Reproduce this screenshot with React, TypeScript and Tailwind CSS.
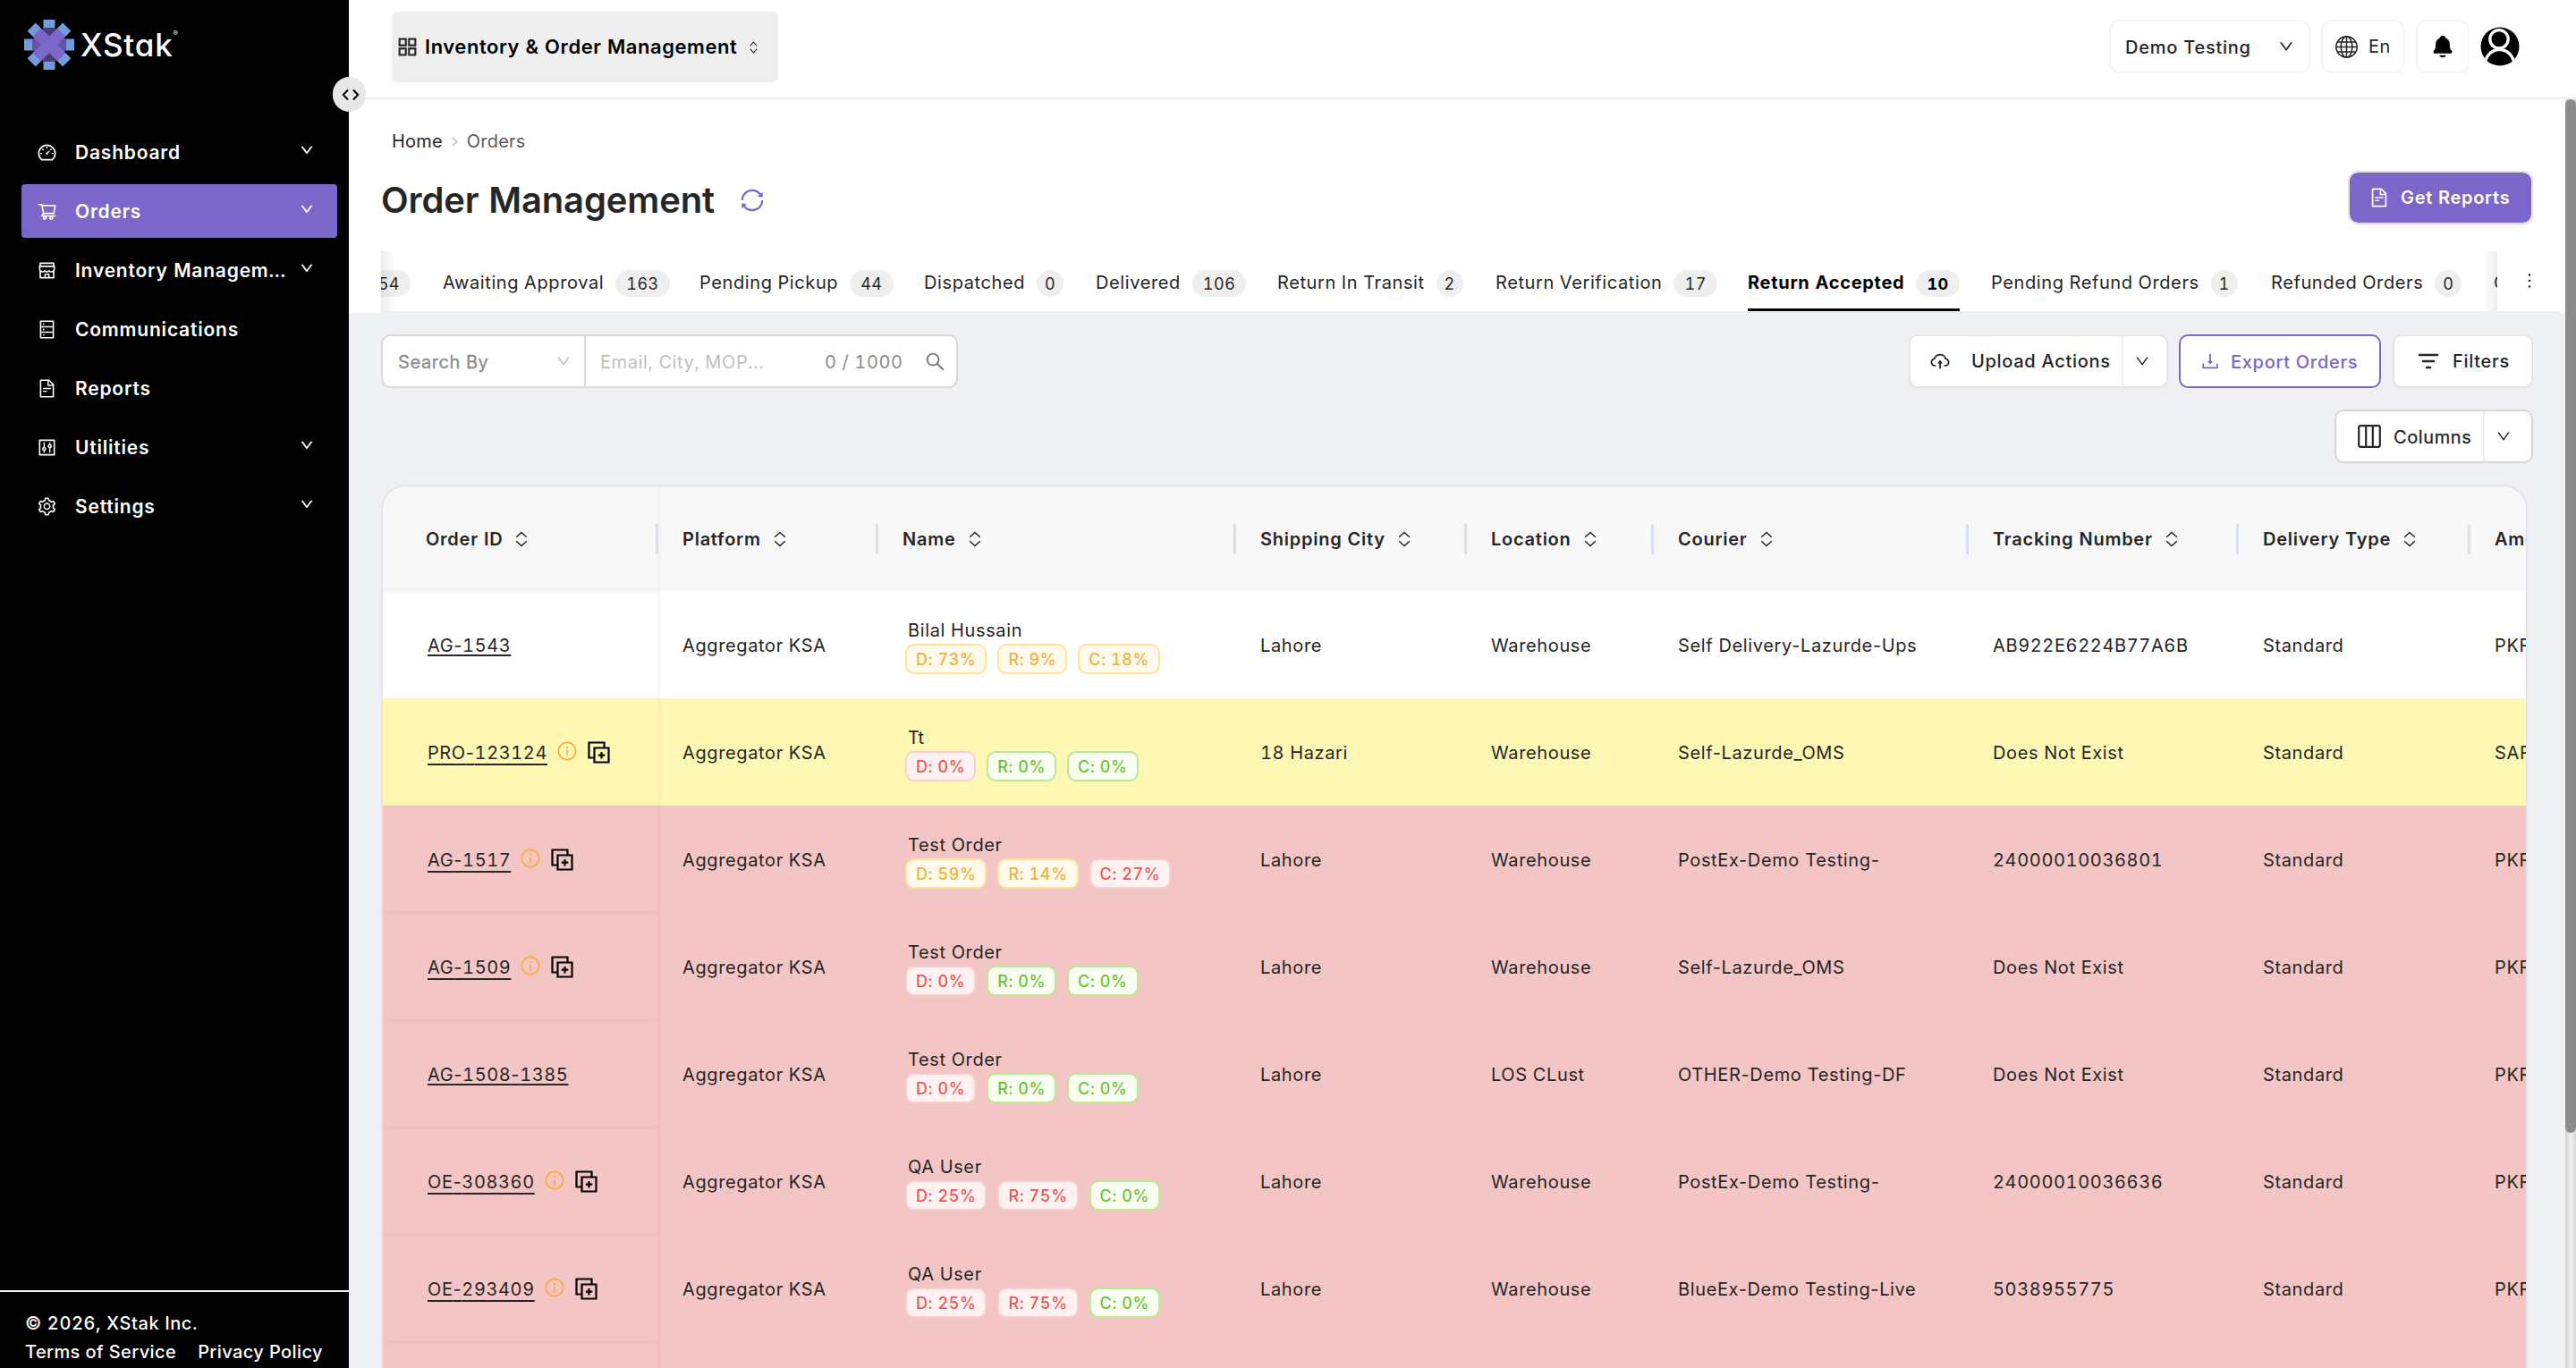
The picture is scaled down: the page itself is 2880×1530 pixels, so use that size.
import React from "react";
import {
  AiOutlineDashboard,
  AiOutlineShoppingCart,
  AiOutlineShop,
  AiOutlineDatabase,
  AiOutlineFileText,
  AiOutlineControl,
  AiOutlineSetting,
  AiOutlineAppstore,
  AiOutlineDown,
  AiOutlineRight,
  AiOutlineSync,
  AiOutlineSearch,
  AiOutlineCloudUpload,
  AiOutlineDownload,
  AiOutlineInfoCircle,
  AiOutlineMore,
} from "react-icons/ai";
import { BsGlobe } from "react-icons/bs";
import { IoNotifications } from "react-icons/io5";

const navItems = [
  { label: "Dashboard", icon: AiOutlineDashboard, more: true },
  { label: "Orders", icon: AiOutlineShoppingCart, more: true, active: true },
  { label: "Inventory Managem...", icon: AiOutlineShop, more: true },
  { label: "Communications", icon: AiOutlineDatabase },
  { label: "Reports", icon: AiOutlineFileText },
  { label: "Utilities", icon: AiOutlineControl, more: true },
  { label: "Settings", icon: AiOutlineSetting, more: true },
];

const tabs = [
  { label: "Awaiting Approval", count: 163, width: "w-[287px]" },
  { label: "Pending Pickup", count: 44, width: "w-[251px]" },
  { label: "Dispatched", count: 0, width: "w-[192px]" },
  { label: "Delivered", count: 106, width: "w-[203px]" },
  { label: "Return In Transit", count: 2, width: "w-[244px]" },
  { label: "Return Verification", count: 17, width: "w-[282px]" },
  { label: "Return Accepted", count: 10, width: "w-[272px]", active: true },
  { label: "Pending Refund Orders", count: 1, width: "w-[313px]" },
  { label: "Refunded Orders", count: 0, width: "w-[249px]" },
];

const columns = [
  "Order ID",
  "Platform",
  "Name",
  "Shipping City",
  "Location",
  "Courier",
  "Tracking Number",
  "Delivery Type",
];

const gridCols =
  "grid w-[2500px] grid-cols-[308px_246px_400px_258px_209px_352px_302px_259px_160px]";

const tagStyles = {
  gold: "border-[#ffe396] bg-[#fffaeb] text-[#f2b13c]",
  red: "border-[#fbcfcd] bg-[#fff2f0] text-[#f25555]",
  green: "border-[#b9e990] bg-[#f8fff0] text-[#6cc23a]",
};

const rowColors = {
  white: "bg-white",
  yellow: "bg-[#fff8b4]",
  red: "bg-[#f3c5c5]",
};

type Tone = keyof typeof tagStyles;

type Order = {
  id: string;
  icons: boolean;
  color: keyof typeof rowColors;
  name: string;
  tags: [string, Tone][];
  city: string;
  location: string;
  courier: string;
  tracking: string;
  amount: string;
};

const orders: Order[] = [
  {
    id: "AG-1543",
    icons: false,
    color: "white",
    name: "Bilal Hussain",
    tags: [["D: 73%", "gold"], ["R: 9%", "gold"], ["C: 18%", "gold"]],
    city: "Lahore",
    location: "Warehouse",
    courier: "Self Delivery-Lazurde-Ups",
    tracking: "AB922E6224B77A6B",
    amount: "PKR",
  },
  {
    id: "PRO-123124",
    icons: true,
    color: "yellow",
    name: "Tt",
    tags: [["D: 0%", "red"], ["R: 0%", "green"], ["C: 0%", "green"]],
    city: "18 Hazari",
    location: "Warehouse",
    courier: "Self-Lazurde_OMS",
    tracking: "Does Not Exist",
    amount: "SAR",
  },
  {
    id: "AG-1517",
    icons: true,
    color: "red",
    name: "Test Order",
    tags: [["D: 59%", "gold"], ["R: 14%", "gold"], ["C: 27%", "red"]],
    city: "Lahore",
    location: "Warehouse",
    courier: "PostEx-Demo Testing-",
    tracking: "24000010036801",
    amount: "PKR",
  },
  {
    id: "AG-1509",
    icons: true,
    color: "red",
    name: "Test Order",
    tags: [["D: 0%", "red"], ["R: 0%", "green"], ["C: 0%", "green"]],
    city: "Lahore",
    location: "Warehouse",
    courier: "Self-Lazurde_OMS",
    tracking: "Does Not Exist",
    amount: "PKR",
  },
  {
    id: "AG-1508-1385",
    icons: false,
    color: "red",
    name: "Test Order",
    tags: [["D: 0%", "red"], ["R: 0%", "green"], ["C: 0%", "green"]],
    city: "Lahore",
    location: "LOS CLust",
    courier: "OTHER-Demo Testing-DF",
    tracking: "Does Not Exist",
    amount: "PKR",
  },
  {
    id: "OE-308360",
    icons: true,
    color: "red",
    name: "QA User",
    tags: [["D: 25%", "red"], ["R: 75%", "red"], ["C: 0%", "green"]],
    city: "Lahore",
    location: "Warehouse",
    courier: "PostEx-Demo Testing-",
    tracking: "24000010036636",
    amount: "PKR",
  },
  {
    id: "OE-293409",
    icons: true,
    color: "red",
    name: "QA User",
    tags: [["D: 25%", "red"], ["R: 75%", "red"], ["C: 0%", "green"]],
    city: "Lahore",
    location: "Warehouse",
    courier: "BlueEx-Demo Testing-Live",
    tracking: "5038955775",
    amount: "PKR",
  },
];

function Logo() {
  return (
    <svg width="58" height="58" viewBox="-29 -29 58 58">
      <g fill="#719ddc">
        <rect x="-6.5" y="-28" width="13" height="56" />
        <rect x="-28" y="-6.5" width="56" height="13" />
        <rect x="-6.5" y="-28" width="13" height="56" transform="rotate(45)" />
        <rect x="-6.5" y="-28" width="13" height="56" transform="rotate(-45)" />
      </g>
      <rect x="-19" y="-6.5" width="38" height="13" fill="#6452a3" />
      <rect x="-6.5" y="-19" width="13" height="38" fill="#493c78" />
      <g fill="#7b66ca">
        <rect x="-6.5" y="-19.5" width="13" height="39" transform="rotate(45)" />
        <rect x="-6.5" y="-19.5" width="13" height="39" transform="rotate(-45)" />
      </g>
    </svg>
  );
}

function SortIcon({ small }: { small?: boolean }) {
  return (
    <svg
      width={small ? 9 : 14}
      height={small ? 14 : 18}
      viewBox="0 0 14 18"
      preserveAspectRatio="none"
      fill="none"
      stroke="currentColor"
      strokeWidth="1.5"
    >
      <path d="M1.2 6.8 7 1.4l5.8 5.4M1.2 11.2 7 16.6l5.8-5.4" />
    </svg>
  );
}

function DuplicateIcon() {
  return (
    <svg width="25" height="25" viewBox="0 0 25 25" fill="none" stroke="#000" strokeWidth="2.2">
      <path d="M7 18.5H1.5v-17h17V7" />
      <path d="M7.5 7.5h16v16h-16zM15.5 12v7.5M11.8 15.7h7.5" />
    </svg>
  );
}

function AvatarIcon() {
  return (
    <svg width="44" height="44" viewBox="0 0 44 44">
      <defs>
        <clipPath id="avatar">
          <circle cx="22" cy="22" r="21.5" />
        </clipPath>
      </defs>
      <circle cx="22" cy="22" r="21.5" fill="#000" />
      <g clipPath="url(#avatar)" fill="#000" stroke="#fff" strokeWidth="3.3">
        <path d="M5 42c1-10 8-16.5 16.5-16.5S37 32 38 42" />
        <circle cx="21" cy="13.8" r="10.2" />
      </g>
    </svg>
  );
}

// the tabular hyphen is too wide between digit groups
function OrderId({ id }: { id: string }) {
  return id.split("-").map((part, i) => (
    <React.Fragment key={i}>
      {i > 0 && <span className="normal-nums">-</span>}
      {part}
    </React.Fragment>
  ));
}

function Sidebar() {
  return (
    <aside className="flex h-full w-[390px] shrink-0 flex-col bg-black text-white">
      <div className="flex h-[137px] items-start gap-1.5 pl-[26px] pt-[21px]">
        <Logo />
        <div className="flex pt-[7px]">
          <span className="text-[35px] font-medium leading-[44px] tracking-[0.8px] [font-feature-settings:'cv11']">
            XStak
          </span>
          <span className="pt-0.5 text-[8px] leading-[14px]">®</span>
        </div>
      </div>
      <nav className="flex grow flex-col gap-[6px]">
        {navItems.map(({ label, icon: Icon, more, active }) => (
          <div
            key={label}
            className={`ml-6 mr-[13px] flex h-[60px] items-center rounded-[4px] pl-[17px] ${
              active ? "bg-[#7b66ca]" : ""
            } ${label === "Dashboard" ? "mt-[3px]" : ""}`}
          >
            <Icon className="size-[23px]" />
            <span className="ml-5 grow text-[21px] font-semibold leading-none tracking-[0.8px]">
              {label}
            </span>
            {more && <AiOutlineDown className="mb-[4px] mr-[26px] size-[16px] stroke-[40]" />}
          </div>
        ))}
      </nav>
      <footer className="h-[87px] border-t-2 border-[#f0f0f0] pl-7 pt-[19px] text-[20px] font-medium leading-8 tracking-[0.4px]">
        <p className="tracking-[0.6px]">© 2026, XStak Inc.</p>
        <p className="flex gap-[24px]">
          <a>Terms of Service</a>
          <a>Privacy Policy</a>
        </p>
      </footer>
    </aside>
  );
}

function Topbar() {
  return (
    <header className="flex h-[111px] shrink-0 items-start border-b-2 border-[#efefef] bg-white pl-12">
      <div className="mt-[13px] flex h-[79px] w-[432px] items-center rounded-[6px] bg-[#efefef] pl-[4px]">
        <AiOutlineAppstore className="size-[27px] stroke-[14]" />
        <span className="ml-[6px] text-[22px] font-semibold tracking-[0.55px] text-black">
          Inventory &amp; Order Management
        </span>
        <span className="ml-[14px]">
          <SortIcon small />
        </span>
      </div>
      <div className="ml-auto mr-[63px] mt-[22px] flex items-start gap-3">
        <div className="flex h-[60px] w-[225px] items-center justify-between rounded-[12px] border-2 border-[#f5f5f5] px-4">
          <span className="pt-px text-[20px] font-medium tracking-[0.75px]">Demo Testing</span>
          <AiOutlineDown className="size-[18px] stroke-[20]" />
        </div>
        <div className="flex h-[60px] w-[94px] items-center gap-3 rounded-[12px] border-2 border-[#f5f5f5] pl-3.5">
          <BsGlobe className="size-[25px]" />
          <span className="text-[20px] tracking-[0.6px]">En</span>
        </div>
        <div className="flex h-[60px] w-[60px] items-center justify-center rounded-[12px] border-2 border-[#f5f5f5]">
          <IoNotifications className="size-[28px] text-black" />
        </div>
        <div className="pt-[8px]">
          <AvatarIcon />
        </div>
      </div>
    </header>
  );
}

function Tabs() {
  return (
    <div className="mt-[31px] flex h-[69px] pl-9">
      <div className="relative flex w-[2366px] items-start overflow-hidden whitespace-nowrap border-b-2 border-[#efefef]">
        <div className="w-[69px] shrink-0 pt-[21px]">
          <span className="-ml-5 flex h-[30px] w-[53px] items-center justify-end rounded-full bg-[#efefef] pr-3 pt-px text-[18px] tracking-[0.5px]">
            54
          </span>
        </div>
        {tabs.map((tab) => (
          <div key={tab.label} className={`h-full shrink-0 ${tab.width}`}>
            <div
              className={`relative flex h-full w-fit items-start gap-[13px] pt-[21px] ${
                tab.active ? "font-bold text-black" : ""
              }`}
            >
              <span
                className={`-mt-px text-[20px] leading-[30px] ${
                  tab.active ? "tracking-[0.7px]" : "tracking-[0.6px]"
                }`}
              >
                {tab.label}
              </span>
              <span
                className={`flex h-[30px] min-w-[30px] items-center justify-center rounded-full bg-[#efefef] pt-px text-[18px] leading-none tracking-[0.5px] ${
                  tab.count < 10 ? "" : "px-[12px]"
                }`}
              >
                {tab.count}
              </span>
              {tab.active && <span className="absolute bottom-0 left-0 h-[3px] w-full bg-black" />}
            </div>
          </div>
        ))}
        <span className="shrink-0 pt-[20px] text-[20px] leading-[30px]">Cancelled</span>
        <span className="absolute left-0 top-0 h-full w-4 bg-linear-to-r from-black/7 to-transparent" />
        <span className="absolute right-0 top-0 h-full w-4 bg-linear-to-l from-black/7 to-transparent" />
      </div>
      <div className="mr-1.5 flex grow justify-center border-b-2 border-[#efefef] pt-[21px]">
        <AiOutlineMore className="ml-[2px] size-[24px]" />
      </div>
    </div>
  );
}

function Toolbar() {
  const button =
    "flex items-center rounded-[10px] bg-white text-[20px] font-medium tracking-[0.7px]";
  return (
    <div className="flex h-[60px] justify-between pl-9 pr-9">
      <div className="flex w-[645px] items-center rounded-[10px] border-2 border-[#d9d9d9] bg-white text-[20px] tracking-[0.6px]">
        <div className="flex h-full w-[227px] items-center justify-between border-r-2 border-[#d9d9d9] pl-4 pr-[14px]">
          <span className="pl-px pt-px text-[#8c8c8c] [-webkit-text-stroke:0.3px]">Search By</span>
          <AiOutlineDown className="size-[18px] text-[#b9b9b9]" />
        </div>
        <span className="ml-4 w-[251px] pt-px text-[#bfbfbf]">Email, City, MOP...</span>
        <span className="w-[111px] pt-px text-[#8c8c8c]">0 / 1000</span>
        <AiOutlineSearch className="size-[25px] text-[#777]" />
      </div>
      <div className="flex">
        <div className={`${button} w-[290px] border-2 border-[#e6e6e6] shadow-xs`}>
          <AiOutlineCloudUpload className="ml-[21px] size-[24px]" />
          <span className="ml-[23px] w-[168px]">Upload Actions</span>
          <span className="flex h-full items-center border-l-2 border-[#efefef] pl-3">
            <AiOutlineDown className="size-[18px]" />
          </span>
        </div>
        <div className={`${button} ml-[12px] w-[226px] border-2 border-[#7b66ca] text-[#7b66ca]`}>
          <AiOutlineDownload className="ml-[21px] size-[24px]" />
          <span className="ml-[11px] pt-px">Export Orders</span>
        </div>
        <div className={`${button} ml-[13px] w-[157px] border-2 border-[#e6e6e6] shadow-xs`}>
          <svg
            width="24"
            height="20"
            viewBox="0 0 24 20"
            className="ml-[26px]"
            stroke="currentColor"
            strokeWidth="2.6"
            strokeLinecap="round"
          >
            <path d="M2 3h20M6 10h12M10 17h4" />
          </svg>
          <span className="ml-[15px]">Filters</span>
        </div>
      </div>
    </div>
  );
}

function OrderTable() {
  return (
    <div className="ml-9 mt-6 h-[1100px] w-[2400px] overflow-hidden rounded-t-[28px] border-2 border-[#e4e5e8] bg-white">
      <div className={`${gridCols} h-[117px] bg-[#f8f8f8]`}>
        {columns.map((col, i) => (
          <div
            key={col}
            className={`flex items-center justify-between ${
              i === 0 ? "pl-12 shadow-[2px_0_4px_rgba(0,0,0,0.04)]" : "pl-[27px]"
            }`}
          >
            <span className="flex items-center gap-[14px] text-[20px] font-semibold tracking-[0.75px]">
              {col}
              <SortIcon />
            </span>
            <span className="h-[34px] w-[3px] bg-[#dbe1ec]" />
          </div>
        ))}
        <div className="flex items-center pl-[27px] text-[20px] font-semibold tracking-[0.75px]">
          Amount
        </div>
      </div>
      {orders.map((order) => (
        <div
          key={order.id}
          className={`${gridCols} h-[120px] items-center text-[20px] tracking-[0.63px] [&>div]:pl-[27px] [&>div]:pt-px ${rowColors[order.color]}`}
        >
          <div className="flex h-full items-center pl-[50px]! tracking-[0.6px] shadow-[2px_0_4px_rgba(0,0,0,0.04)] inset-shadow-[0_-1px_3px_rgba(0,0,0,0.02)]">
            <span
              className={`underline decoration-2 ${
                order.icons ? "underline-offset-[5px]" : "underline-offset-[3px]"
              }`}
            >
              <OrderId id={order.id} />
            </span>
            {order.icons && (
              <>
                <AiOutlineInfoCircle className="mb-[4px] ml-[10px] size-[24px] text-[#faad3a]" />
                <span className="ml-[11px]">
                  <DuplicateIcon />
                </span>
              </>
            )}
          </div>
          <div>Aggregator KSA</div>
          <div className="h-full pt-8!">
            <p className="pl-[6px] leading-[24px]">{order.name}</p>
            <div className="mt-[3px] flex gap-[12px] pl-[3px]">
              {order.tags.map(([text, tone]) => (
                <span
                  key={text}
                  className={`flex h-[34px] items-center rounded-[10px] border-2 px-[10px] pt-px text-[18px] font-medium tracking-[0.6px] ${tagStyles[tone]}`}
                >
                  {text}
                </span>
              ))}
            </div>
          </div>
          <div>{order.city}</div>
          <div>{order.location}</div>
          <div className="normal-nums">{order.courier}</div>
          <div>{order.tracking}</div>
          <div>Standard</div>
          <div>{order.amount}</div>
        </div>
      ))}
      <div className={`${gridCols} h-[120px] bg-[#f3c5c5]`}>
        <div className="shadow-[2px_0_4px_rgba(0,0,0,0.04)]" />
      </div>
    </div>
  );
}

export default function App() {
  return (
    <div className="relative flex h-[1530px] w-[2880px] overflow-hidden bg-[#f0f1f5] font-[Inter,sans-serif] tabular-nums text-[#262626]">
      <Sidebar />
      <main className="flex h-full min-w-0 grow flex-col">
        <Topbar />
        <div className="flex min-h-0 grow">
          <div className="min-w-0 grow">
            <section className="h-[239px] bg-white pt-8">
              <div className="flex h-[30px] items-center pl-12 text-[20px] tracking-[0.2px]">
                <span>Home</span>
                <AiOutlineRight className="mx-[7px] size-[13px] stroke-[30] text-[#b5b5b5]" />
                <span className="text-[#5c5c5c]">Orders</span>
              </div>
              <div className="mt-5 flex h-[57px] items-start justify-between pl-9 pr-9">
                <div className="flex items-center pt-[7px]">
                  <h1 className="text-[40px] font-semibold leading-[48px] tracking-[-0.14px]">
                    Order Management
                  </h1>
                  <AiOutlineSync className="ml-[27px] size-[30px] text-[#7b66ca]" />
                </div>
                <button className="-mt-[2px] flex h-[60px] w-[207px] items-center rounded-[11px] border-2 border-[#e2e2e6] bg-[#7b66ca] bg-clip-padding pl-[21px] text-[20px] font-semibold tracking-[0.7px] text-white shadow-xs">
                  <AiOutlineFileText className="size-[24px]" />
                  <span className="ml-[12px]">Get Reports</span>
                </button>
              </div>
              <Tabs />
            </section>
            <div className="pt-6">
              <Toolbar />
              <div className="mt-6 flex justify-end pr-9">
                <div className="flex h-[60px] w-[222px] items-center rounded-[10px] border-2 border-[#d5d6d9] bg-white text-[20px] tracking-[0.6px]">
                  <svg
                    width="26"
                    height="26"
                    viewBox="0 0 26 26"
                    className="ml-[24px]"
                    fill="none"
                    stroke="currentColor"
                    strokeWidth="2.2"
                  >
                    <rect x="1.2" y="1.2" width="23.6" height="23.6" rx="2" />
                    <path d="M9.2 1v24M16.8 1v24" />
                  </svg>
                  <span className="ml-[14px] w-[100px] pt-px [-webkit-text-stroke:0.3px]">
                    Columns
                  </span>
                  <span className="flex h-full items-center border-l-2 border-[#efefef] pl-[12px]">
                    <AiOutlineDown className="size-[18px]" />
                  </span>
                </div>
              </div>
              <OrderTable />
            </div>
          </div>
          {/* scrollbar */}
          <div className="w-3 shrink-0 bg-linear-to-r from-[#cfcfcf] via-[#f0f0f0] to-[#d6d6d6]">
            <div className="h-[1156px] rounded-full bg-[#8c8c8c]" />
          </div>
        </div>
      </main>
      <span className="absolute left-[372px] top-[86px] flex h-[39px] w-[37px] items-center justify-center rounded-full bg-[#e8e8e8] pl-[3px]">
        <svg width="20" height="14" viewBox="0 0 20 14" fill="none" stroke="#000" strokeWidth="2">
          <path d="M7 1.5 1.8 7 7 12.5M13 1.5 18.2 7 13 12.5" />
        </svg>
      </span>
    </div>
  );
}
